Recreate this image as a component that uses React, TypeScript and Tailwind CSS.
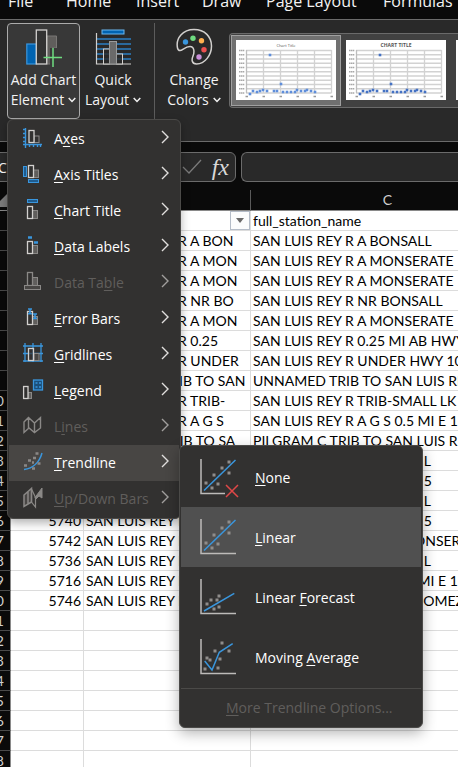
import type { ReactNode } from "react";

const SANS = "font-['Open_Sans','Noto_Sans',sans-serif]";
const CELL = "font-[Lato,'Liberation_Sans',sans-serif]";

const tabs = [
  { label: "File", width: "w-[58px]" },
  { label: "Home", width: "w-[70px]" },
  { label: "Insert", width: "w-[66px]" },
  { label: "Draw", width: "w-16" },
  { label: "Page Layout", width: "w-[117px]" },
  { label: "Formulas", width: "w-[100px]" },
];

type Row = [string, string, string];

const rows: Row[] = [
  ["5710", "SAN LUIS REY R A BON", "SAN LUIS REY R A BONSALL"],
  ["5712", "SAN LUIS REY R A MON", "SAN LUIS REY R A MONSERATE"],
  ["5714", "SAN LUIS REY R A MON", "SAN LUIS REY R A MONSERATE"],
  ["5718", "SAN LUIS REY R NR BO", "SAN LUIS REY R NR BONSALL"],
  ["5720", "SAN LUIS REY R A MON", "SAN LUIS REY R A MONSERATE"],
  ["5722", "SAN LUIS REY R 0.25", "SAN LUIS REY R 0.25 MI AB HWY 395"],
  ["5724", "SAN LUIS REY R UNDER", "SAN LUIS REY R UNDER HWY 101"],
  ["5726", "UNNAMED TRIB TO SAN", "UNNAMED TRIB TO SAN LUIS REY R"],
  ["5728", "SAN LUIS REY R TRIB-", "SAN LUIS REY R TRIB-SMALL LK"],
  ["5730", "SAN LUIS REY R A G S", "SAN LUIS REY R A G S 0.5 MI E 15"],
  ["5732", "PILGRAM C TRIB TO SA", "PILGRAM C TRIB TO SAN LUIS REY R"],
  ["5734", "SAN LUIS REY R A BRI", "SAN LUIS REY R A BRIDGE L"],
  ["5738", "SAN LUIS REY R A BRI", "SAN LUIS REY R A BRIDGE 5"],
  ["5744", "SAN LUIS REY R A BRI", "SAN LUIS REY R A BRIDGE L"],
  ["5740", "SAN LUIS REY R A BRI", "SAN LUIS REY R A BRIDGE 5"],
  ["5742", "SAN LUIS REY R 1.5 M", "SAN LUIS REY R 1.5 MI MONSERATE"],
  ["5736", "SAN LUIS REY R A BRI", "SAN LUIS REY R A BRIDGE L"],
  ["5716", "SAN LUIS REY R A G S", "SAN LUIS REY R A G S 0.5 MI E 15"],
  ["5746", "SAN LUIS REY R A RCH", "SAN LUIS REY R A RCHO GOMEZ"],
  ...Array.from({ length: 8 }, (): Row => ["", "", ""]),
];

const BLUE = "#3a96dd";
const LIGHT = "#d2d0ce";
const GREY = "#8a8886";

/* Paired outline bars shared by most chart element icons. */
function Bars({ x, y, h, y2, w = 5, w2 = 5, fill = "#605e5c", stroke = LIGHT }: {
  x: number; y: number; h: number; y2: number; w?: number; w2?: number; fill?: string; stroke?: string;
}) {
  return (
    <>
      <rect x={x + w} y={y2} width={w2} height={y + h - y2} fill={fill} stroke={GREY} />
      <rect x={x} y={y} width={w} height={h} fill="#323130" stroke={stroke} strokeWidth="1.3" />
    </>
  );
}

const icons: Record<string, ReactNode> = {
  axes: (
    <>
      <Bars x={6} y={1.5} h={12} y2={7} w2={5} fill="none" />
      <path d="M2.5-1v20M0 15.5h19M0 .5h3M0 4.5h3M0 8.5h3M0 12.5h3M6.5 15v3M10.5 15v3M14.5 15v3M17.5 15v3" stroke={BLUE} strokeWidth="1.4" />
    </>
  ),
  axisTitles: (
    <>
      <Bars x={5.5} y={.5} h={12} y2={5} w2={5} />
      <rect x=".5" y="1.5" width="3" height="10" fill="#1f5c8f" stroke={BLUE} />
      <rect x="5.5" y="14.5" width="10" height="3" fill="#1f5c8f" stroke={BLUE} />
    </>
  ),
  chartTitle: (
    <>
      <Bars x={4.5} y={5.5} h={12} y2={9.5} />
      <rect x="4.5" y="-1.5" width="10" height="3" fill="#1f5c8f" stroke={BLUE} />
    </>
  ),
  dataLabels: (
    <>
      <Bars x={4.5} y={4.5} h={12} y2={8.5} />
      <path d="M5 .5h4M11 5.5h4" stroke={BLUE} strokeWidth="2.6" />
    </>
  ),
  dataTable: (
    <>
      <Bars x={4.5} y={-.5} h={13} y2={4.5} stroke={GREY} />
      <rect x="1.5" y="12.5" width="16" height="4" fill="#484644" stroke={GREY} />
    </>
  ),
  errorBars: (
    <>
      <Bars x={4.5} y={2.5} h={13} y2={7.5} />
      <path d="M7 0v5M5 0h4M5 4.8h4M12 5v5M10 5h4M10 9.5h4" stroke={BLUE} strokeWidth="1.6" />
    </>
  ),
  gridlines: (
    <>
      <path d="M2-2v19M10-2v19M18-2v19M0 1h20M0 8.5h20M0 16h20" stroke={BLUE} strokeWidth="1.3" />
      <rect x="11" y="8.5" width="5" height="7" fill="#484644" stroke={GREY} />
      <rect x="5.5" y="3.5" width="5" height="12" fill="#323130" fillOpacity=".7" stroke={LIGHT} strokeWidth="1.3" />
    </>
  ),
  legend: (
    <>
      <Bars x={.6} y={5.5} h={12} y2={11.5} w={4.4} w2={3.5} />
      <rect x="10.5" y="-1" width="9" height="10" fill="#1b4f7a" stroke={BLUE} strokeWidth="1.3" />
      <path d="M12.5 2h2M16 2h2M12.5 6h2M16 6h2" stroke={BLUE} strokeWidth="1.6" />
    </>
  ),
  lines: (
    <path d="M1 5 5.5.5 11.5 6 17.5.5v10.5L11.5 15.5 6 11 1 15.5zM5.5.5v10.5M11.5 6v9.5" stroke={GREY} strokeWidth="1.4" />
  ),
  trendline: (
    <>
      <path d="M1 16.5C10 15.5 16.5 9 19 0" stroke={BLUE} strokeWidth="1.5" />
      <path d="M12.5.5h3M10 5h3M5 7.5h3M1 12.5h3M14.5 10.5h3M9 9.5h2M9 15.5h3" stroke={GREY} strokeWidth="2.6" />
    </>
  ),
  upDown: (
    <>
      <path d="M1 6 8.5-.5v13.5L1 17.5zM5 2.5v13" stroke={GREY} strokeWidth="1.5" fill="#484644" />
      <path d="M8.5 0 12.5 8.5V18L8.5 13z" stroke={GREY} strokeWidth="1.2" />
      <path d="M12 8.5 19-1v10l-3-2-3 3z" fill={GREY} stroke={GREY} />
    </>
  ),
};

type MenuItem = { icon: string; before?: string; key: string; after: string; disabled?: boolean; open?: boolean };

const menu: MenuItem[] = [
  { icon: "axes", before: "A", key: "x", after: "es" },
  { icon: "axisTitles", key: "A", after: "xis Titles" },
  { icon: "chartTitle", key: "C", after: "hart Title" },
  { icon: "dataLabels", key: "D", after: "ata Labels" },
  { icon: "dataTable", before: "Data Ta", key: "b", after: "le", disabled: true },
  { icon: "errorBars", key: "E", after: "rror Bars" },
  { icon: "gridlines", key: "G", after: "ridlines" },
  { icon: "legend", key: "L", after: "egend" },
  { icon: "lines", before: "L", key: "i", after: "nes", disabled: true },
  { icon: "trendline", key: "T", after: "rendline", open: true },
  { icon: "upDown", key: "U", after: "p/Down Bars", disabled: true },
];

type Trend = { before?: string; key: string; after: string; line: string; dots: [number, number][]; cross?: boolean; active?: boolean };

const scatter: [number, number][] = [[29, 3], [22, 9], [29, 14], [14, 16], [6, 24], [18, 25], [12, 29]];

const trends: Trend[] = [
  { key: "N", after: "one", line: "M4 31.5 35.5 1", dots: scatter, cross: true },
  { key: "L", after: "inear", line: "M4 31.5 35.5 1", dots: scatter, active: true },
  {
    before: "Linear ", key: "F", after: "orecast", line: "M4 32 34.3 14.3",
    dots: [[19, 17], [17, 21], [11, 21], [7, 25], [19, 28], [14, 30]],
  },
  {
    before: "Moving ", key: "A", after: "verage", line: "M4.7 22 12 31 19.3 13.3 32.7 4.7",
    dots: [[22, 4], [15, 12], [29, 12], [7, 19], [10, 21], [20, 20], [5, 30], [18, 29]],
  },
];

function Mnemonic({ before = "", letter, after }: { before?: string; letter: string; after: string }) {
  return (
    <span className="whitespace-pre">
      {before}
      <u className="underline decoration-1 underline-offset-2">{letter}</u>
      {after}
    </span>
  );
}

function Caret() {
  return (
    <svg className="mb-0.5 ml-1 inline-block" width="8" height="6" viewBox="0 0 8 6" fill="none" aria-hidden="true">
      <path d="M.7 1 4 4.500 7.300 1" stroke="#f0f0f0" strokeWidth="1.500" />
    </svg>
  );
}

function RibbonButton({ icon, top, bottom, className }: { icon: ReactNode; top: string; bottom: string; className: string }) {
  return (
    <button type="button" className={`flex h-24 shrink-0 flex-col items-center rounded border pt-1 text-[14px] leading-5 whitespace-nowrap text-[#f3f3f3] ${className}`}>
      {icon}
      <span className="mt-0.5">{top}</span>
      <span>
        {bottom}
        <Caret />
      </span>
    </button>
  );
}

const points: [number, number][] = [
  [34, 15], [45, 44], [14, 54], [17, 51], [21, 52], [24, 51], [27, 50], [31, 51], [38, 51], [41, 51], [47, 52],
  [51, 52], [55, 52], [59, 52], [61, 50], [65, 51], [69, 51], [71, 50], [75, 51], [79, 52],
];

function Thumbnail({ title, bold }: { title: string; bold?: boolean }) {
  return (
    <svg width="100" height="60" viewBox="0 0 100 60" className={`shrink-0 bg-white ${SANS}`} role="img" aria-label={title}>
      <text x="50" y="6.5" fontSize={bold ? 5 : 4} fontWeight={bold ? 700 : 400} textAnchor="middle" fill="#555">{title}</text>
      {Array.from({ length: 11 }, (_, i) => (
        <g key={i}>
          <path d={`M10 ${10.5 + i * 4.25}H95.5`} stroke="#d2d2d2" strokeWidth="1.3" />
          <path d={`M3 ${10.5 + i * 4.25}H8.5`} stroke="#a8a8a8" strokeWidth="1.3" strokeDasharray="1.5 .4" />
        </g>
      ))}
      {Array.from({ length: 6 }, (_, i) => (
        <g key={i}>
          <path d={`M${10.5 + i * 17} 10V53`} stroke={i === 0 ? "#bdbdbd" : "#d2d2d2"} strokeWidth="1.3" />
          <path d={`M${9.5 + i * 17} 56.5h2.5`} stroke="#999" strokeWidth="1.3" />
        </g>
      ))}
      {points.map(([x, y], i) => (
        <rect key={i} x={x - 1.3} y={y - 1.3} width="2.6" height="2.6" fill={bold ? "#4472c4" : "#5f8edb"} />
      ))}
    </svg>
  );
}

function Ribbon() {
  return (
    <div className="flex h-[122px] overflow-hidden border-b border-[#6b6b6b] bg-[#292929] pt-[3px] pl-[7px]">
      <RibbonButton
        className="w-[73px] border-[#ababab] bg-[#383838]"
        top="Add Chart"
        bottom="Element"
        icon={
          <svg width="36" height="40" viewBox="0 0 36 40" fill="none" className="shrink-0" aria-hidden="true">
            <path d="M21 8h9.500v12H26v16h-5z" fill="#605e5c" stroke="#797775" />
            <rect x=".8" y="16" width="9.5" height="20" fill="#0063b1" stroke="#3a96dd" strokeWidth="1.2" />
            <path d="M24 20h7.500v17H24z" fill="#383838" />
            <rect x="10.3" y="2" width="10.4" height="34" fill="#333" stroke="#d2d0ce" strokeWidth="1.3" />
            <path d="M27 20v19M17.500 29.500h19" stroke="#6fdc80" strokeWidth="1.500" />
          </svg>
        }
      />
      <RibbonButton
        className="w-[66px] border-transparent"
        top="Quick"
        bottom="Layout"
        icon={
          <svg width="36" height="40" viewBox="0 0 36 40" fill="none" className="shrink-0" aria-hidden="true">
            <rect x="7" y="2" width="22" height="4" fill="#0063b1" stroke="#6cb8f0" />
            <path d="M1 11h35M1 16h35M1 21h35M1 26h35M1 31h35" stroke="#2b7fc4" strokeWidth="1.7" />
            <path d="M1.5 5v31H36" stroke="#d2d0ce" strokeWidth="1.2" />
            <rect x="8.5" y="21" width="6" height="15" fill="#292929" fillOpacity=".8" stroke="#d2d0ce" />
            <rect x="21.5" y="26" width="6" height="10" fill="#292929" fillOpacity=".8" stroke="#d2d0ce" />
            <rect x="14.5" y="13.5" width="7" height="22.5" fill="#6a6a6a" stroke="#9a9a9a" />
          </svg>
        }
      />
      <div className="ml-2 w-px shrink-0 bg-[#5c5c5c]" />
      <RibbonButton
        className="ml-1 w-[70px] border-transparent"
        top="Change"
        bottom="Colors"
        icon={
          <svg width="37" height="40" viewBox="0 0 37 40" fill="none" className="shrink-0" aria-hidden="true">
            <path d="M1.5 20C-.5 10 7 1.5 18 1.5S35.5 9 35.5 18 29 36 20.5 36c-5 0-5-4.500-3.500-8s1.500-9.500-3-9.500c-5 0-7.500 4-10 4-1.500 0-2.200-1-2.500-2.500z" stroke="#d2d0ce" strokeWidth="1.5" />
            <circle cx="9.500" cy="14" r="2.700" fill="#3a96dd" />
            <circle cx="17" cy="10.300" r="2.700" fill="#6fdc80" />
            <circle cx="25.500" cy="12.700" r="2.700" fill="#ffb04f" />
            <circle cx="28" cy="21.700" r="2.700" fill="#ee5050" />
            <circle cx="23" cy="29" r="2.700" fill="#c98fd9" />
          </svg>
        }
      />
      <div className="mt-2.5 flex h-[75px] min-w-0 flex-1 overflow-hidden rounded-l border border-r-0 border-[#6a6a6a] bg-[#414141] p-px">
        <button type="button" className="flex h-[71px] shrink-0 border border-[#a0a0a0] bg-[#707070] p-1">
          <Thumbnail title="Chart Title" />
        </button>
        <button type="button" className="flex h-[71px] shrink-0 p-[5px]">
          <Thumbnail title="CHART TITLE" bold />
        </button>
        <button type="button" className="flex h-[71px] shrink-0 p-[5px]">
          <Thumbnail title="Chart Title" />
        </button>
      </div>
    </div>
  );
}

function FormulaBar() {
  return (
    <div className="flex h-[30px] text-[14px] text-white">
      <div className="flex w-[100px] items-center border-y border-[#6b6b6b] bg-[#292929]">
        <span className="-ml-0.5">Chart 1</span>
      </div>
      <div className="ml-4 flex w-[120px] shrink-0 items-center justify-end gap-2.5 rounded-md border border-[#6b6b6b] bg-[#292929] pr-1.5">
        <button type="button" aria-label="Enter">
          <svg width="20" height="16" viewBox="0 0 20 16" fill="none">
            <path d="M1 8l6 6L19 1" stroke="#7a7a7a" strokeWidth="1.300" />
          </svg>
        </button>
        <button type="button" aria-label="Insert function" className="font-['Liberation_Serif',serif] text-[24px] leading-6 text-[#d8d8d8] italic">
          fx
        </button>
      </div>
      <input aria-label="Formula" className="ml-[5px] min-w-0 flex-1 rounded-l-md border border-r-0 border-[#6b6b6b] bg-[#292929] px-2 outline-none" />
    </div>
  );
}

function RowHead({ n }: { n: number }) {
  return (
    <th scope="row" className="h-5 overflow-hidden border-r border-b border-r-[#8a8a8a] border-b-[#4a4a4a] bg-[#0a0a0a] p-0 pt-px align-top font-normal text-[#d0d0d0]">
      <div className="flex justify-end pr-1.5 leading-[18px]">{n > 9 ? n : ""}</div>
    </th>
  );
}

const cell = "h-5 overflow-hidden border-b border-[#dcdcdc] p-0 text-left align-top leading-[18px] font-normal whitespace-nowrap";

function Sheet() {
  return (
    <table className={`w-full table-fixed border-separate border-spacing-0 text-[14px] text-black ${CELL}`}>
      <colgroup>
        <col className="w-[11px]" />
        <col className="w-[73px]" />
        <col className="w-[167px]" />
        <col />
      </colgroup>
      <thead>
        <tr className="bg-[#0a0a0a] leading-[18px] text-[#d0d0d0]">
          <th className="h-[21px] border-b border-[#8a8a8a] p-0" aria-label="Select all">
            <svg width="7" height="13" viewBox="0 0 7 13" aria-hidden="true">
              <path d="M7 0v13H0V7z" fill="#7d7d7d" />
            </svg>
          </th>
          <th className="border-r border-b border-[#8a8a8a] p-0 pt-px align-top font-normal">A</th>
          <th className="border-r border-b border-r-[#5a5a5a] border-b-[#8a8a8a] p-0 pt-px align-top font-normal">B</th>
          <th className="border-b border-[#8a8a8a] p-0 pt-px pl-[66px] text-center align-top font-normal">C</th>
        </tr>
      </thead>
      <tbody className="bg-white">
        <tr>
          <RowHead n={1} />
          <td className={`border-r ${cell}`} />
          <td className={`border-r ${cell}`}>
            <div className="flex h-[19px] items-center justify-between pl-0.5">
              station_name
              <button type="button" aria-label="Filter" className="flex h-[19px] w-5 items-center justify-center border border-[#b4bcc8] bg-[#fbfcfd]">
                <svg width="8" height="5" viewBox="0 0 8 5" aria-hidden="true">
                  <path d="M0 0h8L4 5z" fill="#6a6a6a" />
                </svg>
              </button>
            </div>
          </td>
          <td className={cell}>
            <div className="pt-px pl-0.5">full_station_name</div>
          </td>
        </tr>
        {rows.map(([id, short, full], i) => (
          <tr key={i}>
            <RowHead n={i + 2} />
            <td className={`border-r ${cell}`}>
              <div className="pt-px pr-0.5 text-right">{id}</div>
            </td>
            <td className={`border-r ${cell}`}>
              <div className="pt-px pl-0.5">{short}</div>
            </td>
            <td className={cell}>
              <div className="pt-px pl-0.5">{full}</div>
            </td>
          </tr>
        ))}
      </tbody>
    </table>
  );
}

function ElementMenu() {
  return (
    <div role="menu" className="absolute top-[119px] left-[7px] w-[174px] rounded-md border border-[#4b4a48] bg-[#323130] p-px text-[14px] text-white shadow-[0_4px_10px_rgba(0,0,0,0.3)]">
      {menu.map((item) => (
        <button
          key={item.icon}
          type="button"
          role="menuitem"
          disabled={item.disabled}
          className={`flex h-9 w-full items-center pr-2.5 pl-3.5 ${item.open ? "bg-[#484644]" : ""} ${item.disabled ? "text-[#605e5c]" : ""}`}
        >
          <svg width="20" height="20" viewBox="0 0 20 20" fill="none" className="shrink-0 overflow-visible" aria-hidden="true">
            {icons[item.icon]}
          </svg>
          <span className="ml-[11px] flex-1 pb-0.5 text-left">
            <Mnemonic before={item.before} letter={item.key} after={item.after} />
          </span>
          <svg width="8" height="14" viewBox="0 0 8 14" fill="none" className="mb-1 shrink-0" aria-hidden="true">
            <path d="M1 1l6 6-6 6" stroke={item.disabled ? "#a19f9d" : "#e1dfdd"} strokeWidth="1.400" />
          </svg>
        </button>
      ))}
    </div>
  );
}

function TrendlineMenu() {
  return (
    <div role="menu" className="absolute top-[445px] left-[179px] w-[244px] rounded-md border border-[#4b4a48] bg-[#323130] p-px text-[14px] text-white shadow-[0_5px_14px_rgba(0,0,0,0.3)]">
      {trends.map((t) => (
        <button key={t.after} type="button" role="menuitem" className={`flex h-[60px] w-full items-center pl-[19px] ${t.active ? "bg-[#505050]" : ""}`}>
          <svg width="36" height="36" viewBox="0 0 36 36" fill="none" className="shrink-0 overflow-visible" aria-hidden="true">
            <path d={t.cross ? "M1 0v34.500h24" : "M1 0v34.500h35"} stroke="#bdbbb9" strokeWidth="1.500" />
            {t.dots.map(([x, y], i) => (
              <rect key={i} x={x - 1.5} y={y - 1.5} width="3" height="3" fill="#8f8d8b" />
            ))}
            <path d={t.line} stroke={BLUE} strokeWidth="1.500" />
            {t.cross && <path d="M26 26l12 12M38 26L26 38" stroke="#e04848" strokeWidth="1.500" />}
          </svg>
          <span className="ml-[19px]">
            <Mnemonic before={t.before} letter={t.key} after={t.after} />
          </span>
        </button>
      ))}
      <div className="mt-px h-px bg-[#4b4a48]" />
      <button type="button" role="menuitem" disabled className="flex h-[37px] w-full items-center pl-[45px] text-[#605e5c]">
        <Mnemonic letter="M" after="ore Trendline Options..." />
      </button>
    </div>
  );
}

export default function App() {
  return (
    <main className={`relative h-screen overflow-hidden bg-[#0a0a0a] ${SANS}`}>
      <nav className="flex h-5 items-end overflow-hidden border-b border-[#6b6b6b] pl-2 text-[16px] leading-6 text-[#f3f3f3]">
        {tabs.map((t) => (
          <button key={t.label} type="button" className={`mb-1.5 shrink-0 text-left whitespace-nowrap ${t.width}`}>
            {t.label}
          </button>
        ))}
      </nav>
      <Ribbon />
      <div className="pt-2.5 pb-2">
        <FormulaBar />
      </div>
      <Sheet />
      <ElementMenu />
      <TrendlineMenu />
    </main>
  );
}
